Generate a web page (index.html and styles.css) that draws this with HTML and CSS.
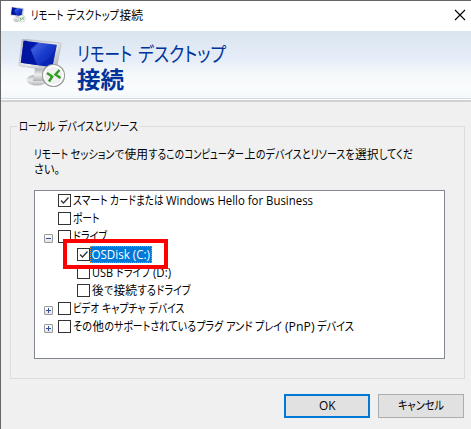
FILE: index.html
```html
<!DOCTYPE html>
<html lang="ja">
<head>
<meta charset="utf-8">
<title>リモート デスクトップ接続</title>
<link rel="stylesheet" href="styles.css">
</head>
<body>
<svg width="0" height="0" class="defs">
  <defs>
    <linearGradient id="screen" x1="0" y1="0" x2="1" y2=".8"><stop offset="0" stop-color="#0019a8"/><stop offset=".3" stop-color="#0018ac"/><stop offset=".36" stop-color="#3c5cdc"/><stop offset=".6" stop-color="#1a3ccc"/><stop offset="1" stop-color="#0a20b0"/></linearGradient>
    <linearGradient id="bezel" x1="0" y1="0" x2="1" y2="1"><stop offset="0" stop-color="#b9bdc0"/><stop offset=".5" stop-color="#e7e9ea"/><stop offset="1" stop-color="#a2a6aa"/></linearGradient>
    <linearGradient id="stand" x1="0" y1="0" x2="0" y2="1"><stop offset="0" stop-color="#a4a8ab"/><stop offset=".5" stop-color="#eceded"/><stop offset="1" stop-color="#b0b3b6"/></linearGradient>
    <symbol id="rdp" viewBox="0 0 48 50">
      <ellipse cx="19" cy="41" rx="10.500" ry="5.500" fill="url(#stand)"/>
      <path d="M17 29L27 31V42H15Z" fill="url(#stand)"/>
      <path d="M5 0L42 4Q43.200 4.200 43 5.500L38.200 31Q37.800 32.500 36.300 32.200L2 26.800Q1 26.500 1 25.500L4 1Q4.200 0 5 0Z" fill="url(#bezel)" stroke="#a9adb1" stroke-width=".5"/>
      <path d="M5.700 1.800L38.800 5.700L34.300 28.300L2.800 23.800Z" fill="url(#screen)"/>
      <path d="M5.700 1.800H9L19 26.100L2.800 23.800Z" fill="#0015a0"/>
      <path d="M38.800 5.700L34.300 28.300L20 26.300Q34 20 38.800 5.700Z" fill="#0018a8" opacity=".4"/>
      <circle cx="35.500" cy="36.500" r="11" fill="#f0f0f0" stroke="#999" stroke-width="1.200"/>
      <circle cx="35.500" cy="36.500" r="9.600" fill="none" stroke="#fff" stroke-width="1.500"/>
      <path d="M29 34L34.200 37.500L31 42.500M41.500 31L37.500 35.500L42.500 39" fill="none" stroke="#319b22" stroke-width="2.400"/>
    </symbol>
  </defs>
</svg>
<main class="dialog">
  <div class="titlebar">
    <svg class="app-icon"><use href="#rdp"/></svg>
    <svg class="title-text"><text x="0" y="20" textLength="32.500" lengthAdjust="spacingAndGlyphs">リモート</text><text x="35.500" y="20" textLength="52.500" lengthAdjust="spacingAndGlyphs">デスクトップ</text><text x="88.500" y="20" textLength="23.500" lengthAdjust="spacingAndGlyphs">接続</text></svg>
    <svg class="close" viewBox="0 0 10 10"><path d="M0 0L10 10M10 0L0 10"/></svg>
  </div>
  <header class="banner">
    <svg class="banner-icon"><use href="#rdp"/></svg>
    <svg class="heading"><text x="0" y="31" textLength="55" lengthAdjust="spacingAndGlyphs">リモート</text><text x="61" y="31" textLength="88" lengthAdjust="spacingAndGlyphs">デスクトップ</text><text class="strong" x="0" y="57" textLength="47" lengthAdjust="spacingAndGlyphs">接続</text></svg>
  </header>
  <fieldset class="group">
    <legend><svg class="legend-text"><text x="0" y="14" textLength="36" lengthAdjust="spacingAndGlyphs">ローカル</text><text x="39" y="14" textLength="80" lengthAdjust="spacingAndGlyphs">デバイスとリソース</text></svg></legend>
    <svg class="intro">
      <text x="0" y="15" textLength="34" lengthAdjust="spacingAndGlyphs">リモート</text><text x="36.500" y="15" textLength="53.500" lengthAdjust="spacingAndGlyphs">セッションで</text><text x="90.500" y="15" textLength="23.500" lengthAdjust="spacingAndGlyphs">使用</text><text x="114.500" y="15" textLength="35.500" lengthAdjust="spacingAndGlyphs">するこの</text><text x="150.500" y="15" textLength="59.500" lengthAdjust="spacingAndGlyphs">コンピューター</text><text x="210.500" y="15" textLength="11" lengthAdjust="spacingAndGlyphs">上</text><text x="222" y="15" textLength="98.500" lengthAdjust="spacingAndGlyphs">のデバイスとリソースを</text><text x="321" y="15" textLength="23.500" lengthAdjust="spacingAndGlyphs">選択</text><text x="345" y="15" textLength="34" lengthAdjust="spacingAndGlyphs">してくだ</text>
      <text x="0" y="30" textLength="26" lengthAdjust="spacingAndGlyphs">さい。</text>
    </svg>
    <div class="tree">
      <div class="row"><i class="toggle empty"></i><svg class="check"><path d="M3 6.500L5.500 9L10.500 3.500"/></svg><svg class="label"><text x="2" y="13" textLength="34.500" lengthAdjust="spacingAndGlyphs">スマート</text><text x="39" y="13" textLength="53.500" lengthAdjust="spacingAndGlyphs">カードまたは</text><text class="latin" x="95" y="13" textLength="147" lengthAdjust="spacingAndGlyphs">Windows Hello for Business</text></svg></div>
      <div class="row"><i class="toggle empty"></i><svg class="check"></svg><svg class="label"><text x="2" y="13" textLength="26.500" lengthAdjust="spacingAndGlyphs">ポート</text></svg></div>
      <div class="row"><svg class="toggle"><path d="M2 4.500H7"/></svg><svg class="check"></svg><svg class="label"><text x="2" y="13" textLength="34" lengthAdjust="spacingAndGlyphs">ドライブ</text></svg></div>
      <div class="row child"><svg class="check"><path d="M3 6.500L5.500 9L10.500 3.500"/></svg><svg class="label selected"><text class="latin" x="1.500" y="13" textLength="58.500" lengthAdjust="spacingAndGlyphs">OSDisk (C:)</text></svg><i class="highlight"></i></div>
      <div class="row child"><svg class="check"></svg><svg class="label"><text class="latin" x="2" y="13" textLength="21" lengthAdjust="spacingAndGlyphs">USB</text><text x="26" y="13" textLength="34" lengthAdjust="spacingAndGlyphs">ドライブ</text><text class="latin" x="63" y="13" textLength="18" lengthAdjust="spacingAndGlyphs">(D:)</text></svg></div>
      <div class="row child"><svg class="check"></svg><svg class="label"><text x="2" y="13" textLength="11.500" lengthAdjust="spacingAndGlyphs">後</text><text x="14" y="13" textLength="9" lengthAdjust="spacingAndGlyphs">で</text><text x="23.500" y="13" textLength="23.500" lengthAdjust="spacingAndGlyphs">接続</text><text x="47.500" y="13" textLength="18.500" lengthAdjust="spacingAndGlyphs">する</text><text x="66.500" y="13" textLength="34" lengthAdjust="spacingAndGlyphs">ドライブ</text></svg></div>
      <div class="row"><svg class="toggle"><path d="M2 4.500H7M4.500 2V7"/></svg><svg class="check"></svg><svg class="label"><text x="2" y="13" textLength="26" lengthAdjust="spacingAndGlyphs">ビデオ</text><text x="31" y="13" textLength="43.500" lengthAdjust="spacingAndGlyphs">キャプチャ</text><text x="77.500" y="13" textLength="36" lengthAdjust="spacingAndGlyphs">デバイス</text></svg></div>
      <div class="row"><svg class="toggle"><path d="M2 4.500H7M4.500 2V7"/></svg><svg class="check"></svg><svg class="label"><text x="2" y="13" textLength="19" lengthAdjust="spacingAndGlyphs">その</text><text x="21.500" y="13" textLength="11.500" lengthAdjust="spacingAndGlyphs">他</text><text x="33.500" y="13" textLength="91.500" lengthAdjust="spacingAndGlyphs">のサポートされている</text><text x="125.500" y="13" textLength="26.500" lengthAdjust="spacingAndGlyphs">プラグ</text><text x="155" y="13" textLength="26.500" lengthAdjust="spacingAndGlyphs">アンド</text><text x="184" y="13" textLength="27" lengthAdjust="spacingAndGlyphs">プレイ</text><text class="latin" x="214" y="13" textLength="29.500" lengthAdjust="spacingAndGlyphs">(PnP)</text><text x="246" y="13" textLength="37" lengthAdjust="spacingAndGlyphs">デバイス</text></svg></div>
    </div>
  </fieldset>
  <footer class="actions">
    <button class="primary"><svg class="button-text"><text class="latin" x="33" y="14" textLength="16.500" lengthAdjust="spacingAndGlyphs">OK</text></svg></button>
    <button><svg class="button-text"><text x="19" y="14" textLength="46" lengthAdjust="spacingAndGlyphs">キャンセル</text></svg></button>
  </footer>
</main>
</body>
</html>
```
FILE: styles.css
```css
* { box-sizing: border-box; }
body { margin: 0; background: #f0f0f0; overflow: hidden; }
.dialog { width: 471px; height: 429px; border-top: 1px solid #666; border-left: 1px solid #666; background: #f0f0f0; }
svg { display: block; flex: none; overflow: visible; }
.defs { height: 0; }
text {
  font: 12px "Noto Sans CJK JP", sans-serif;
  font-feature-settings: "palt";
  fill: #000;
}
.latin { font-family: "Open Sans", "Noto Sans", sans-serif; }

.titlebar { display: flex; height: 30px; background: #fff; }
.app-icon { width: 16px; height: 16px; margin: 6px 0 0 8.500px; }
.title-text { width: 120px; height: 28px; margin: -1px 0 0 5px; }
.close { width: 10px; height: 10px; margin: 9px 6px 0 auto; fill: none; stroke: #000; stroke-width: 1.100; }

.banner {
  display: flex;
  height: 71px;
  border-bottom: 2px solid #d2d2d2;
  background:
    linear-gradient(#fff, #fff) 0 68px / 100% 1px no-repeat,
    linear-gradient(#d8dbde, #d8dbde) 0 67px / 100% 1px no-repeat,
    linear-gradient(#dae5f0 0, #dfe8f3 12px, #e6edf8 28px, #f5f9fb 43px, #fafcfc 57px, #f4f8fc 67px);
}
.banner-icon { width: 48px; height: 50px; margin: 8px 0 0 17px; }
.heading { width: 160px; height: 66px; margin-left: 11px; }
.heading text { font-size: 20px; fill: #039; }
.heading .strong { font-size: 23px; font-weight: 700; }

.group { width: 455px; height: 262px; margin: 15px 0 0 9px; padding: 0 0 0 23px; border: 1px solid #dcdcdc; }
legend { width: 123px; height: 18px; margin-left: -17px; padding: 0 0 0 2px; }
.legend-text { width: 120px; height: 18px; }
.intro { width: 400px; height: 38px; margin-top: 9px; }

.tree { width: 411px; height: 169px; margin-top: 8px; border: 1px solid #828790; background: #fff; padding: 1px 0 0 9px; }
.row { display: flex; align-items: center; height: 18px; }
.child { padding-left: 33px; position: relative; }
.toggle { width: 9px; height: 9px; margin: 3px 5px 0 0; border: 1px solid #999; border-radius: 1px; background: linear-gradient(#fff, #e4e4e4); }
.toggle path { stroke: #304ea0; stroke-width: 1; fill: none; transform: translate(-1px, -1px); }
.empty { visibility: hidden; }
.check { width: 13px; height: 13px; margin-top: -1px; border: 1px solid #333; background: #fff; }
.check path { fill: none; stroke: #333; stroke-width: 1.300; transform: translate(-1px, -1px); }
.label { width: 62px; height: 17px; margin-top: -1px; }
.selected { background: #0078d7; outline: 1px dotted #e88728; outline-offset: -1px; }
.selected text { fill: #fff; }
.highlight { position: absolute; left: 19px; top: -7px; width: 105px; height: 30px; border: 4px solid #f00; z-index: 1; }

.actions { display: flex; justify-content: flex-end; gap: 8px; margin: 15px 7px 0 0; }
button { width: 86px; height: 24px; padding: 0; border: 1px solid #adadad; background: #e1e1e1; }
.primary { border: 2px solid #0078d7; }
.button-text { width: 82px; height: 20px; }
```
